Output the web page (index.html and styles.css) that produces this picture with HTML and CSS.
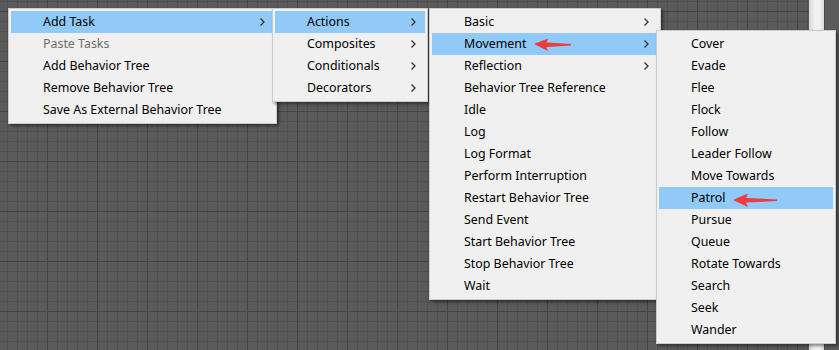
FILE: index.html
```html
<!DOCTYPE html>
<html lang="en">
<head>
  <meta charset="UTF-8" />
  <title>Behavior Tree Context Menu</title>
  <link rel="stylesheet" href="styles.css">
</head>
<body>
  <div class="editor">
    <div class="canvas">

      <div class="menu menu-main">
        <div class="item active">Add Task <svg class="chev" width="5" height="8" viewBox="0 0 5 8"><path d="M0.5 0.5 L4 4 L0.5 7.5" fill="none" stroke="#333" stroke-width="1.3"/></svg></div>
        <div class="item disabled">Paste Tasks</div>
        <div class="item">Add Behavior Tree</div>
        <div class="item">Remove Behavior Tree</div>
        <div class="item">Save As External Behavior Tree</div>
      </div>

      <div class="menu menu-category">
        <div class="item active">Actions <svg class="chev" width="5" height="8" viewBox="0 0 5 8"><path d="M0.5 0.5 L4 4 L0.5 7.5" fill="none" stroke="#333" stroke-width="1.3"/></svg></div>
        <div class="item">Composites <svg class="chev" width="5" height="8" viewBox="0 0 5 8"><path d="M0.5 0.5 L4 4 L0.5 7.5" fill="none" stroke="#333" stroke-width="1.3"/></svg></div>
        <div class="item">Conditionals <svg class="chev" width="5" height="8" viewBox="0 0 5 8"><path d="M0.5 0.5 L4 4 L0.5 7.5" fill="none" stroke="#333" stroke-width="1.3"/></svg></div>
        <div class="item">Decorators <svg class="chev" width="5" height="8" viewBox="0 0 5 8"><path d="M0.5 0.5 L4 4 L0.5 7.5" fill="none" stroke="#333" stroke-width="1.3"/></svg></div>
      </div>

      <div class="menu menu-actions">
        <div class="item">Basic <svg class="chev" width="5" height="8" viewBox="0 0 5 8"><path d="M0.5 0.5 L4 4 L0.5 7.5" fill="none" stroke="#333" stroke-width="1.3"/></svg></div>
        <div class="item active">Movement
          <svg class="pointer pointer-movement" width="38" height="14" viewBox="0 0 38 14"><path d="M0 6 L14 0.5 L12.5 4.5 L37 6 L37 7.5 L12.5 9 L14 13 Z" fill="#ee3b3b"/></svg>
          <svg class="chev" width="5" height="8" viewBox="0 0 5 8"><path d="M0.5 0.5 L4 4 L0.5 7.5" fill="none" stroke="#333" stroke-width="1.3"/></svg></div>
        <div class="item">Reflection <svg class="chev" width="5" height="8" viewBox="0 0 5 8"><path d="M0.5 0.5 L4 4 L0.5 7.5" fill="none" stroke="#333" stroke-width="1.3"/></svg></div>
        <div class="item">Behavior Tree Reference</div>
        <div class="item">Idle</div>
        <div class="item">Log</div>
        <div class="item">Log Format</div>
        <div class="item">Perform Interruption</div>
        <div class="item">Restart Behavior Tree</div>
        <div class="item">Send Event</div>
        <div class="item">Start Behavior Tree</div>
        <div class="item">Stop Behavior Tree</div>
        <div class="item">Wait</div>
      </div>

      <div class="menu menu-movement">
        <div class="item">Cover</div>
        <div class="item">Evade</div>
        <div class="item">Flee</div>
        <div class="item">Flock</div>
        <div class="item">Follow</div>
        <div class="item">Leader Follow</div>
        <div class="item">Move Towards</div>
        <div class="item active">Patrol
          <svg class="pointer pointer-patrol" width="45" height="15" viewBox="0 0 45 15"><path d="M0 7 L15 0.5 L13 5 L44 6.5 L44 8 L13 9.5 L15 14 Z" fill="#ee3b3b"/></svg>
        </div>
        <div class="item">Pursue</div>
        <div class="item">Queue</div>
        <div class="item">Rotate Towards</div>
        <div class="item">Search</div>
        <div class="item">Seek</div>
        <div class="item">Wander</div>
      </div>

    </div>
    <div class="scrollbar"></div>
    <div class="side"></div>
  </div>
</body>
</html>
```

FILE: styles.css
```css
body {
  margin: 0;
  font-family: "Noto Sans", "Open Sans", sans-serif;
  font-size: 12.4px;
  background: #5a5a5a;
}
.editor {
  display: flex;
  width: 839px;
  height: 350px;
  overflow: hidden;
}
.canvas {
  position: relative;
  flex: 1;
  background-color: #5a5a5a;
  background-image:
    linear-gradient(#444444 1px, transparent 1px),
    linear-gradient(90deg, #444444 1px, transparent 1px),
    linear-gradient(#505050 1px, transparent 1px),
    linear-gradient(90deg, #505050 1px, transparent 1px);
  background-size: 50px 50px, 50px 50px, 10px 10px, 10px 10px;
  background-position: 0 11px, 47px 0, 0 1px, 7px 0;
}
.scrollbar {
  width: 15px;
  background: linear-gradient(90deg, #d6d6d6, #f2f2f2 40%, #f2f2f2 70%, #dcdcdc);
}
.side {
  width: 14px;
  background: #5c5c5c;
  border-left: 1px solid #4a4a4a;
}
.menu {
  position: absolute;
  background: #f0f0f0;
  border: 1px solid #cccccc;
  padding: 2px;
  box-shadow: 2px 2px 3px rgba(0,0,0,0.45);
}
.menu-main { left: 8px; top: 8px; width: 263px; }
.menu-category { left: 272px; top: 8px; width: 150px; }
.menu-actions { left: 429px; top: 8px; width: 226px; }
.menu-movement { left: 656px; top: 30px; width: 174px; }
.item {
  position: relative;
  display: flex;
  align-items: center;
  height: 22px;
  padding-left: 32px;
  padding-bottom: 1px;
  box-sizing: border-box;
  color: #000;
  white-space: nowrap;
}
.item.active {
  background: #91c9f7;
}
.item.disabled {
  color: #6d6d6d;
}
.chev {
  margin-left: auto;
  margin-right: 9px;
}
.pointer {
  position: absolute;
}
.pointer-movement { left: 102px; top: 5px; }
.pointer-patrol { left: 74px; top: 6px; }
```
